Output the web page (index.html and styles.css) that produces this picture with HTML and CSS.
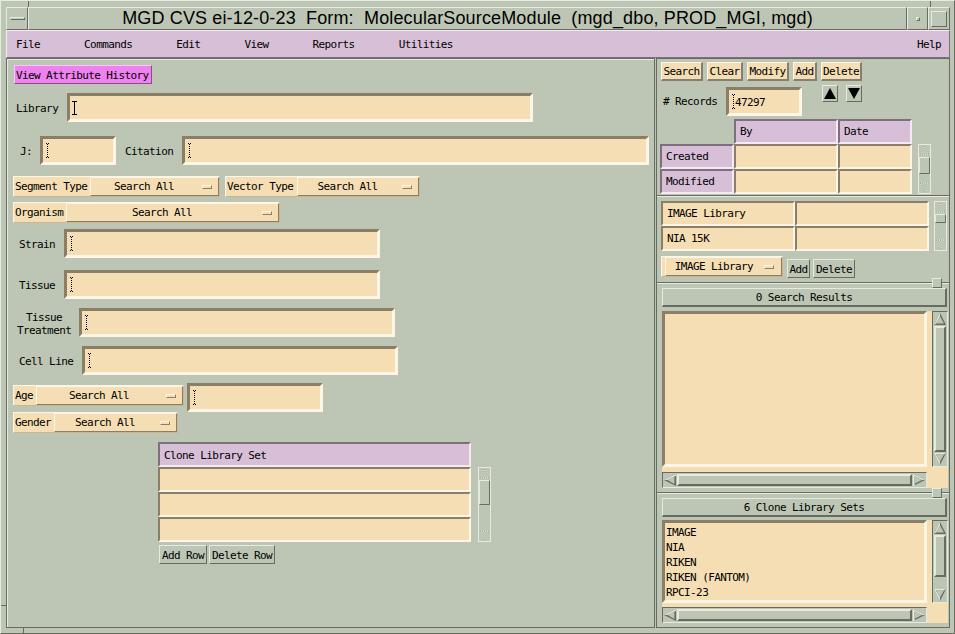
FILE: index.html
```html
<!DOCTYPE html>
<html>
<head>
<meta charset="utf-8">
<title>MolecularSourceModule</title>
<link rel="stylesheet" href="styles.css">
</head>
<body>
<div class="window">
  <span class="mark mark-t1"></span><span class="mark mark-t2"></span><span class="mark mark-l1"></span><span class="mark mark-b1"></span>
  <div class="titlebar">
    <div class="tb-btn tb-menu"><span class="tb-dash"></span></div>
    <div class="tb-title">MGD CVS ei-12-0-23&nbsp; Form:&nbsp; MolecularSourceModule&nbsp; (mgd_dbo, PROD_MGI, mgd)</div>
    <div class="tb-btn tb-min"><span class="tb-dot"></span></div>
    <div class="tb-btn tb-max"><span class="tb-sq"></span></div>
  </div>
  <div class="menubar">
    <span>File</span><span>Commands</span><span>Edit</span><span>View</span><span>Reports</span><span>Utilities</span><span class="help">Help</span>
  </div>
  <div class="main">
    <div class="left">
      <div class="vah">View Attribute History</div>

      <div class="row r-lib">
        <span class="lbl l-lib">Library</span>
        <div class="field f-lib"><svg class="cur" width="5" height="14" viewBox="0 0 5 14"><path d="M0 0.5h5M0 13.5h5M2.5 0v14" stroke="#000" fill="none"/></svg></div>
      </div>

      <div class="row r-j">
        <span class="lbl l-j">J:</span>
        <div class="field f-j"><svg class="cur" width="5" height="15" viewBox="0 0 5 15"><path d="M1 0.5h1M3 0.5h1M1 14.5h1M3 14.5h1" stroke="#000"/><path d="M2.5 1v13" stroke="#000" stroke-dasharray="1 1"/></svg></div>
        <span class="lbl l-cit">Citation</span>
        <div class="field f-cit"><svg class="cur" width="5" height="15" viewBox="0 0 5 15"><path d="M1 0.5h1M3 0.5h1M1 14.5h1M3 14.5h1" stroke="#000"/><path d="M2.5 1v13" stroke="#000" stroke-dasharray="1 1"/></svg></div>
      </div>

      <div class="row r-seg">
        <div class="og"><span class="ol ol-seg">Segment Type</span><div class="ob ob-seg"><span class="ot">Search All</span><span class="ind"></span></div></div>
        <div class="og og-vec"><span class="ol ol-vec">Vector Type</span><div class="ob ob-vec"><span class="ot">Search All</span><span class="ind"></span></div></div>
      </div>

      <div class="row r-org">
        <div class="og"><span class="ol ol-org">Organism</span><div class="ob ob-org"><span class="ot">Search All</span><span class="ind"></span></div></div>
      </div>

      <div class="row r-str">
        <span class="lbl l-str">Strain</span>
        <div class="field f-std"><svg class="cur" width="5" height="15" viewBox="0 0 5 15"><path d="M1 0.5h1M3 0.5h1M1 14.5h1M3 14.5h1" stroke="#000"/><path d="M2.5 1v13" stroke="#000" stroke-dasharray="1 1"/></svg></div>
      </div>

      <div class="row r-tis">
        <span class="lbl l-str">Tissue</span>
        <div class="field f-std"><svg class="cur" width="5" height="15" viewBox="0 0 5 15"><path d="M1 0.5h1M3 0.5h1M1 14.5h1M3 14.5h1" stroke="#000"/><path d="M2.5 1v13" stroke="#000" stroke-dasharray="1 1"/></svg></div>
      </div>

      <div class="row r-tt">
        <span class="lbl l-tt">Tissue<br>Treatment</span>
        <div class="field f-std"><svg class="cur" width="5" height="15" viewBox="0 0 5 15"><path d="M1 0.5h1M3 0.5h1M1 14.5h1M3 14.5h1" stroke="#000"/><path d="M2.5 1v13" stroke="#000" stroke-dasharray="1 1"/></svg></div>
      </div>

      <div class="row r-cl">
        <span class="lbl l-cl">Cell Line</span>
        <div class="field f-std"><svg class="cur" width="5" height="15" viewBox="0 0 5 15"><path d="M1 0.5h1M3 0.5h1M1 14.5h1M3 14.5h1" stroke="#000"/><path d="M2.5 1v13" stroke="#000" stroke-dasharray="1 1"/></svg></div>
      </div>

      <div class="row r-age">
        <div class="og og-age"><span class="ol ol-age">Age</span><div class="ob ob-age"><span class="ot">Search All</span><span class="ind"></span></div></div>
        <div class="field f-age"><svg class="cur" width="5" height="15" viewBox="0 0 5 15"><path d="M1 0.5h1M3 0.5h1M1 14.5h1M3 14.5h1" stroke="#000"/><path d="M2.5 1v13" stroke="#000" stroke-dasharray="1 1"/></svg></div>
      </div>

      <div class="row r-gen">
        <div class="og"><span class="ol ol-gen">Gender</span><div class="ob ob-gen"><span class="ot">Search All</span><span class="ind"></span></div></div>
      </div>

      <div class="ct-row">
        <div class="ctable">
          <div class="th">Clone Library Set</div>
          <div class="td"></div>
          <div class="td"></div>
          <div class="td"></div>
        </div>
        <svg class="ssb ssb-ct" width="13" height="75" viewBox="0 0 13 75">
          <rect x="0.5" y="0.5" width="12" height="74" fill="none" stroke="#e6ebe1"/>
          <path d="M6.5 2L11 11H2Z" fill="none" stroke="#e6ebe1"/>
          <path d="M6.5 2L11 11H2Z" fill="none" stroke="#8d9488" stroke-dasharray="1 1"/>
          <path d="M1.5 37.5V13.5H11.5" stroke="#e6ebe1" fill="none"/>
          <path d="M11.5 13.5V37.5H1.5" stroke="#676c61" fill="none"/>
          <path d="M2 64H11L6.5 73Z" fill="none" stroke="#e6ebe1"/>
          <path d="M2 64H11L6.5 73Z" fill="none" stroke="#8d9488" stroke-dasharray="1 1"/>
        </svg>
      </div>

      <div class="lbtns">
        <div class="gbtn b-addrow">Add Row</div>
        <div class="gbtn b-delrow">Delete Row</div>
      </div>
    </div>

    <div class="right">
      <div class="p1">
        <div class="btnrow">
          <div class="wbtn b-search">Search</div>
          <div class="wbtn b-clear">Clear</div>
          <div class="wbtn b-modify">Modify</div>
          <div class="wbtn b-add">Add</div>
          <div class="wbtn b-delete">Delete</div>
        </div>
        <div class="recrow">
          <span class="lbl l-rec"># Records</span>
          <div class="field f-rec"><svg class="cur cur-rec" width="5" height="15" viewBox="0 0 5 15"><path d="M1 0.5h1M3 0.5h1M1 14.5h1M3 14.5h1" stroke="#000"/><path d="M2.5 1v13" stroke="#000" stroke-dasharray="1 1"/></svg><span class="rec-val">47297</span></div>
          <div class="abtn abtn-up"><svg width="12" height="11" viewBox="0 0 12 11"><path d="M6 0L12 11H0Z" fill="#000"/></svg></div>
          <div class="abtn abtn-down"><svg width="12" height="11" viewBox="0 0 12 11"><path d="M0 0H12L6 11Z" fill="#000"/></svg></div>
        </div>
        <div class="trow">
          <div class="t1">
            <div class="tc-e"></div><div class="tc-h">By</div><div class="tc-h">Date</div>
            <div class="tc-h">Created</div><div class="tc-w"></div><div class="tc-w"></div>
            <div class="tc-h">Modified</div><div class="tc-w"></div><div class="tc-w"></div>
          </div>
          <svg class="ssb ssb-t1" width="13" height="50" viewBox="0 0 13 50">
            <rect x="0.5" y="0.5" width="12" height="49" fill="none" stroke="#e6ebe1"/>
            <path d="M6.5 2L11 11H2Z" fill="none" stroke="#e6ebe1"/>
            <path d="M6.5 2L11 11H2Z" fill="none" stroke="#8d9488" stroke-dasharray="1 1"/>
            <path d="M1.5 29.5V13.5H11.5" stroke="#e6ebe1" fill="none"/>
            <path d="M11.5 13.5V29.5H1.5" stroke="#676c61" fill="none"/>
            <path d="M2 39H11L6.5 48Z" fill="none" stroke="#e6ebe1"/>
            <path d="M2 39H11L6.5 48Z" fill="none" stroke="#8d9488" stroke-dasharray="1 1"/>
          </svg>
        </div>
      </div>
      <div class="psep"></div>
      <div class="p2">
        <div class="trow2">
          <div class="t2">
            <div class="tc-w">IMAGE Library</div><div class="tc-w"></div>
            <div class="tc-w">NIA 15K</div><div class="tc-w"></div>
          </div>
          <svg class="ssb ssb-t2" width="13" height="50" viewBox="0 0 13 50">
            <rect x="0.5" y="0.5" width="12" height="49" fill="none" stroke="#e6ebe1"/>
            <path d="M6.5 2L11 11H2Z" fill="none" stroke="#e6ebe1"/>
            <path d="M6.5 2L11 11H2Z" fill="none" stroke="#8d9488" stroke-dasharray="1 1"/>
            <path d="M1.5 21.5V13.5H11.5" stroke="#e6ebe1" fill="none"/>
            <path d="M11.5 13.5V21.5H1.5" stroke="#676c61" fill="none"/>
            <path d="M2 39H11L6.5 48Z" fill="none" stroke="#e6ebe1"/>
            <path d="M2 39H11L6.5 48Z" fill="none" stroke="#8d9488" stroke-dasharray="1 1"/>
          </svg>
        </div>
        <div class="optrow">
          <div class="og og-img"><span class="ol ol-img"></span><div class="ob ob-img"><span class="ot">IMAGE Library</span><span class="ind ind-img"></span></div></div>
          <div class="gbtn b-add2">Add</div>
          <div class="gbtn b-del2">Delete</div>
        </div>
      </div>
      <div class="sash"></div>
      <div class="p3">
        <div class="plabel">0 Search Results</div>
        <div class="sw sw3">
          <div class="list"></div>
          <div class="vsb">
            <svg width="12" height="12" viewBox="0 0 12 12"><path d="M6 0L12 12H0Z" fill="#676c61"/><path d="M6 0L0 12L2 10.4L6 3.4Z" fill="#e6ebe1"/><path d="M6 3.4L10 10.4H2Z" fill="#bdc6b5"/></svg>
            <div class="slider"></div>
            <svg width="12" height="12" viewBox="0 0 12 12"><path d="M0 0H12L6 12Z" fill="#676c61"/><path d="M0 0H12L10 1.6H2L6 8.6V12Z" fill="#e6ebe1"/><path d="M2 1.6H10L6 8.6Z" fill="#bdc6b5"/></svg>
          </div>
          <div class="hsb">
            <svg width="12" height="12" viewBox="0 0 12 12"><path d="M0 6L12 0V12Z" fill="#676c61"/><path d="M0 6L12 0V1.8L3.2 6Z" fill="#e6ebe1"/><path d="M3.5 6L10.4 2V10Z" fill="#bdc6b5"/></svg>
            <div class="slider"></div>
            <svg width="12" height="12" viewBox="0 0 12 12"><path d="M12 6L0 0V12Z" fill="#676c61"/><path d="M0 0L12 6H9L1.6 2.2V12H0Z" fill="#e6ebe1"/><path d="M1.6 2.2L9 6L1.6 9.8Z" fill="#bdc6b5"/></svg>
          </div>
        </div>
      </div>
      <div class="sash"></div>
      <div class="p4">
        <div class="plabel">6 Clone Library Sets</div>
        <div class="sw sw4">
          <div class="list items">
            <div>IMAGE</div>
            <div>NIA</div>
            <div>RIKEN</div>
            <div>RIKEN (FANTOM)</div>
            <div>RPCI-23</div>
          </div>
          <div class="vsb">
            <svg width="12" height="12" viewBox="0 0 12 12"><path d="M6 0L12 12H0Z" fill="#676c61"/><path d="M6 0L0 12L2 10.4L6 3.4Z" fill="#e6ebe1"/><path d="M6 3.4L10 10.4H2Z" fill="#bdc6b5"/></svg>
            <div class="slider slider-part"></div>
            <div class="trough"></div>
            <svg width="12" height="12" viewBox="0 0 12 12"><path d="M0 0H12L6 12Z" fill="#676c61"/><path d="M0 0H12L10 1.6H2L6 8.6V12Z" fill="#e6ebe1"/><path d="M2 1.6H10L6 8.6Z" fill="#bdc6b5"/></svg>
          </div>
          <div class="hsb">
            <svg width="12" height="12" viewBox="0 0 12 12"><path d="M0 6L12 0V12Z" fill="#676c61"/><path d="M0 6L12 0V1.8L3.2 6Z" fill="#e6ebe1"/><path d="M3.5 6L10.4 2V10Z" fill="#bdc6b5"/></svg>
            <div class="slider"></div>
            <svg width="12" height="12" viewBox="0 0 12 12"><path d="M12 6L0 0V12Z" fill="#676c61"/><path d="M0 0L12 6H9L1.6 2.2V12H0Z" fill="#e6ebe1"/><path d="M1.6 2.2L9 6L1.6 9.8Z" fill="#bdc6b5"/></svg>
          </div>
        </div>
      </div>
      <span class="sashbox sb1"></span>
      <span class="sashbox sb2"></span>
    </div>
  </div>
</div>
</body>
</html>
```

FILE: styles.css
```css
* { box-sizing: border-box; }
html, body { margin: 0; padding: 0; }
body {
  background: #bdc6b5;
  font-family: "DejaVu Sans Mono", "Liberation Mono", monospace;
  font-size: 11px;
  line-height: 13px;
  letter-spacing: -0.6px;
  color: #000;
}

.window {
  position: relative;
  width: 955px;
  height: 634px;
  background: #bdc6b5;
  border: 1px solid;
  border-color: #e6ebe1 #676c61 #676c61 #e6ebe1;
  padding: 6px 4px 5px 5px;
  display: flex;
  flex-direction: column;
  overflow: hidden;
}
.mark { position: absolute; background: #676c61; }
.mark-t1 { left: 27px; top: 0; width: 1px; height: 6px; }
.mark-t2 { left: 929px; top: 0; width: 1px; height: 6px; }
.mark-l1 { left: 0; top: 604px; width: 5px; height: 1px; }
.mark-b1 { left: 22px; top: 627px; width: 1px; height: 6px; }

/* title bar */
.titlebar { display: flex; height: 23px; }
.tb-btn {
  border: 1px solid;
  border-color: #e6ebe1 #676c61 #676c61 #e6ebe1;
  display: flex; align-items: center; justify-content: center;
  width: 21px;
}
.tb-menu { width: 22px; }
.tb-max { width: 22px; }
.tb-title {
  flex: 1;
  border: 1px solid;
  border-color: #e6ebe1 #676c61 #676c61 #e6ebe1;
  text-align: center;
  font-family: "Liberation Sans", Arial, sans-serif;
  font-size: 18px;
  letter-spacing: 0.14px;
  line-height: 21px;
  white-space: nowrap;
}
.tb-dash { width: 15px; height: 3px; border: 1px solid; border-color: #e6ebe1 #676c61 #676c61 #e6ebe1; }
.tb-dot { width: 4px; height: 4px; border: 1px solid; border-color: #e6ebe1 #676c61 #676c61 #e6ebe1; }
.tb-sq { width: 16px; height: 16px; border: 1px solid; border-color: #e6ebe1 #676c61 #676c61 #e6ebe1; }

/* menu bar */
.menubar {
  height: 28px;
  background: #d8bfd8;
  border: 1px solid;
  border-color: #f3eaf3 #7e6e7e #7e6e7e #f3eaf3;
  display: flex;
  align-items: center;
  gap: 44px;
  padding: 0 8px 0 9px;
}
.menubar .help { margin-left: auto; }

.main { display: flex; gap: 1px; height: 570px; }

/* left pane */
.left {
  width: 649px;
  border: 1px solid #676c61;
  box-shadow: inset 1px 1px 0 #e6ebe1;
}
.vah {
  margin: 6px 0 0 7px;
  width: 138px;
  height: 19px;
  background: #ee82ee;
  border: 1px solid;
  border-color: #f8c6f8 #8b4a8b #8b4a8b #f8c6f8;
  padding-left: 1px;
  line-height: 19px;
}
.row { display: flex; align-items: center; }
.lbl { white-space: nowrap; flex: none; padding-top: 2px; }
.field {
  height: 29px;
  flex: none;
  border: 3px solid;
  border-color: #8b7e66 #fdf5e6 #fdf5e6 #8b7e66;
  background: #f5deb3;
  display: flex;
  align-items: center;
  padding-left: 2px;
}
.cur { display: block; flex: none; }
.rec-val { padding-top: 1px; }

.r-lib { margin-top: 9px; }
.l-lib { margin-left: 9px; width: 51px; }
.f-lib { width: 466px; }

.r-j { margin-top: 14px; }
.l-j { margin-left: 13px; width: 20px; }
.f-j { width: 76px; }
.l-cit { margin-left: 9px; width: 57px; }
.f-cit { width: 467px; }

.r-seg { margin-top: 11px; margin-left: 6px; }
.r-org { margin-top: 5px; margin-left: 6px; }

.og {
  display: flex;
  height: 21px;
  flex: none;
  background: #f5deb3;
  border: 1px solid;
  border-color: #fdf5e6 #c8b592 #c8b592 #fdf5e6;
}
.ol { padding-left: 1px; line-height: 19px; white-space: nowrap; flex: none; }
.ob {
  display: flex;
  align-items: center;
  height: 19px;
  flex: none;
  border: 1px solid;
  border-color: #fdf5e6 #8b7e66 #8b7e66 #fdf5e6;
}
.ot { flex: 1; text-align: center; white-space: nowrap; }
.ind {
  width: 10px; height: 4px; flex: none;
  border: 1px solid;
  border-color: #fdf5e6 #8b7e66 #8b7e66 #fdf5e6;
  margin: 0 6px 0 5px;
}
.ind-img { margin: 0 7px 0 2px; }

.ol-seg { width: 76px; }
.ob-seg { width: 129px; }
.og-vec { margin-left: 5px; }
.ol-vec { width: 71px; }
.ob-vec { width: 122px; }
.ol-org { width: 52px; }
.ob-org { width: 213px; }

.r-str { margin-top: 6px; }
.r-tis { margin-top: 12px; }
.l-str { margin-left: 12px; width: 45px; }
.f-std { width: 316px; }

.r-tt { margin-top: 9px; }
.l-tt { margin-left: 10px; width: 54px; margin-right: 8px; text-align: center; }

.r-cl { margin-top: 9px; }
.l-cl { margin-left: 12px; width: 63px; }

.r-age { margin-top: 8px; margin-left: 6px; align-items: flex-start; }
.og-age { margin-top: 2px; }
.ol-age { width: 22px; }
.ob-age { width: 147px; }
.f-age { width: 136px; margin-left: 3px; }

.r-gen { margin-left: 6px; }
.ol-gen { width: 40px; }
.ob-gen { width: 123px; }

.ct-row { display: flex; align-items: flex-start; margin: 9px 0 0 151px; }
.ctable { width: 313px; flex: none; }
.th, .td { height: 25px; border: 2px solid; padding-left: 4px; line-height: 23px; }
.th { background: #d8bfd8; border-color: #7e6e7e #f3eaf3 #f3eaf3 #7e6e7e; }
.td { background: #f5deb3; border-color: #8b7e66 #fdf5e6 #fdf5e6 #8b7e66; }
.ssb { display: block; flex: none; }
.ssb-ct { margin: 25px 0 0 7px; }

.lbtns { display: flex; gap: 2px; margin: 3px 0 0 152px; }
.gbtn {
  height: 19px;
  background: #bdc6b5;
  border: 1px solid;
  border-color: #e6ebe1 #676c61 #676c61 #e6ebe1;
  text-align: center;
  line-height: 19px;
  white-space: nowrap;
  flex: none;
}
.b-addrow { width: 48px; }
.b-delrow { width: 66px; }

/* right pane */
.right {
  width: 294px;
  border: 1px solid #676c61;
  position: relative;
  display: flex;
  flex-direction: column;
}
.p1 { height: 136px; }
.btnrow { display: flex; gap: 4px; margin: 3px 0 0 4px; }
.wbtn {
  height: 19px;
  background: #f5deb3;
  border: 1px solid;
  border-width: 1px 2px 2px 1px;
  border-color: #fdf5e6 #857f70 #857f70 #fdf5e6;
  text-align: center;
  line-height: 18px;
  white-space: nowrap;
  flex: none;
}
.b-search { width: 42px; }
.b-clear { width: 36px; }
.b-modify { width: 42px; }
.b-add { width: 24px; }
.b-delete { width: 41px; }

.recrow { display: flex; align-items: flex-start; margin: 4px 0 0 6px; }
.l-rec { width: 54px; margin: 2px 9px 0 0; line-height: 29px; padding-top: 0; }
.f-rec { width: 76px; margin-top: 2px; }
.cur-rec { margin-right: -1px; }
.abtn {
  width: 16px; height: 17px; flex: none;
  border: 1px solid;
  border-color: #e6ebe1 #676c61 #676c61 #e6ebe1;
  display: flex; align-items: center; justify-content: center;
}
.abtn svg { display: block; }
.abtn-up { margin-left: 20px; }
.abtn-down { margin-left: 8px; }

.trow { display: flex; align-items: flex-start; margin: 3px 0 0 3px; }
.t1 { display: grid; grid-template-columns: 74px 104px 74px; grid-auto-rows: 25px; }
.tc-h, .tc-w { border: 2px solid; padding-left: 4px; line-height: 21px; white-space: nowrap; }
.tc-h { background: #d8bfd8; border-color: #7e6e7e #f3eaf3 #f3eaf3 #7e6e7e; }
.tc-w { background: #f5deb3; border-color: #8b7e66 #fdf5e6 #fdf5e6 #8b7e66; }
.ssb-t1 { margin: 25px 0 0 6px; }

.psep { height: 2px; border-top: 1px solid #676c61; border-bottom: 1px solid #e6ebe1; }

.p2 { height: 84px; }
.trow2 { display: flex; align-items: flex-start; margin: 4px 0 0 4px; }
.t2 { display: grid; grid-template-columns: 134px 134px; grid-auto-rows: 25px; }
.ssb-t2 { margin-left: 5px; }
.optrow { display: flex; align-items: flex-start; margin: 5px 0 0 4px; }
.ol-img { width: 3px; }
.ob-img { width: 117px; }
.og-img { width: 122px; }
.b-add2 { width: 23px; margin: 3px 0 0 4px; }
.b-del2 { width: 42px; margin: 3px 0 0 3px; }

.sash {
  height: 4px;
  background: linear-gradient(#bdc6b5 0 1px, #676c61 1px 2px, #e6ebe1 2px 3px, #bdc6b5 3px);
}
.sashbox {
  position: absolute;
  left: 275px;
  width: 10px; height: 10px;
  background: #bdc6b5;
  border: 1px solid;
  border-color: #e6ebe1 #676c61 #676c61 #e6ebe1;
}
.sb1 { top: 219px; }
.sb2 { top: 429px; }

.p3 { height: 206px; }
.p4 { flex: 1; }
.plabel {
  margin: 3px 0 0 5px;
  width: 285px;
  height: 19px;
  border: 1px solid;
  border-width: 1px 2px 2px 1px;
  border-color: #e6ebe1 #676c61 #676c61 #e6ebe1;
  text-align: center;
  line-height: 18px;
}
.sw {
  display: grid;
  grid-template-columns: 265px 16px;
  column-gap: 5px;
  width: 286px;
  margin-left: 5px;
  background: #f5deb3;
}
.sw3 { margin-top: 4px; grid-template-rows: 156px 16px; row-gap: 5px; }
.sw4 { margin-top: 3px; grid-template-rows: 83px 16px; row-gap: 4px; }
.list {
  background: #f5deb3;
  border: 3px solid;
  border-color: #8b7e66 #fdf5e6 #fdf5e6 #8b7e66;
}
.items { padding: 2px 0 0 1px; line-height: 15px; white-space: nowrap; }

.vsb, .hsb {
  display: flex;
  background: #bdc6b5;
  border: 1px solid;
  border-color: #676c61 #e6ebe1 #e6ebe1 #676c61;
  padding: 1px;
}
.vsb { flex-direction: column; }
.hsb { flex-direction: row; align-items: center; }
.vsb svg, .hsb svg { display: block; flex: none; }
.slider {
  flex: 1;
  background: #bdc6b5;
  border: 2px solid;
  border-color: #e6ebe1 #676c61 #676c61 #e6ebe1;
}
.vsb .slider { margin: 1px 0; }
.hsb .slider { margin: 0 1px; height: 12px; }
.slider-part { flex: none; height: 42px; }
.trough { flex: 1; }
```
